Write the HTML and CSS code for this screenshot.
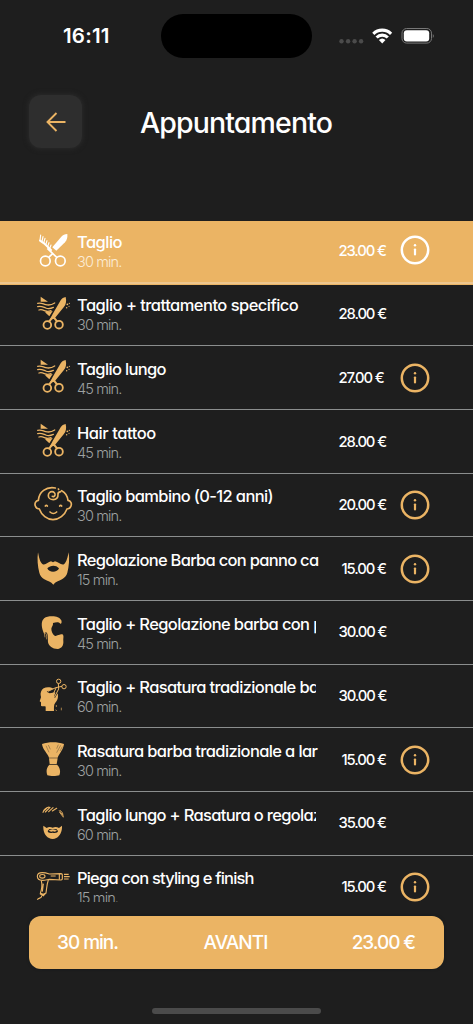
FILE: index.html
```html
<!DOCTYPE html>
<html lang="it">
<head>
<meta charset="utf-8">
<title>Appuntamento</title>
<link rel="stylesheet" href="styles.css">
</head>
<body>
<svg class="defs" aria-hidden="true">
  <symbol id="info" viewBox="0 0 30 30"><circle cx="15" cy="15" r="13.200" fill="none" stroke="currentColor" stroke-width="2.500"/><circle cx="15" cy="10.300" r="1.200" fill="currentColor"/><rect x="13.900" y="13.400" width="2.200" height="7" rx=".8" fill="currentColor"/></symbol>
  <symbol id="cut" viewBox="39 243 120 108">
    <g fill="none" stroke="currentColor" stroke-width="4" stroke-linecap="round">
      <path d="M53 265c10-3 16 2 24 4s17 2 27-5M53 275c10-3 16 1 24 4s15 2 23-2M57 285c8-3 14 1 20 3s10 1 16-1"/>
      <circle cx="82" cy="330" r="11.500" stroke-width="5.500"/><circle cx="117" cy="329" r="11.500" stroke-width="5.500"/>
      <path d="M88 319l9-12M111 319l-9-11" stroke-width="6"/>
    </g>
    <g fill="currentColor"><path d="M62 245l22 15-22 0zM75 292l23-4-10 16zM137 246c3 12 1 23-6 31l-28 34-14 4 9-18 24-41c4-6 8-9 15-10z"/><circle cx="142" cy="268" r="2.700"/><circle cx="148" cy="265" r="2"/><circle cx="140" cy="278" r="2.200"/><circle cx="147" cy="274" r="1.700"/></g>
  </symbol>
</svg>

<header class="status">
  <span class="time">16:11</span>
  <span class="island"></span>
  <svg class="signals" viewBox="0 0 98 18">
    <g fill="#4b4b4b"><circle cx="4.500" cy="14.200" r="2.200"/><circle cx="11.100" cy="14.200" r="2.200"/><circle cx="17.600" cy="14.200" r="2.200"/><circle cx="24.100" cy="14.200" r="2.200"/></g>
    <g fill="none" stroke="#fff" stroke-width="3.100"><path d="M36.300 6.800a12.600 12.600 0 0 1 17.800 0"/><path d="M39.600 10.500a7.900 7.900 0 0 1 11.200 0"/></g>
    <path d="M41.900 13a4.800 4.800 0 0 1 6.600 0l-3.300 3.500z" fill="#fff"/>
    <rect x="65" y="1.500" width="29.500" height="14.600" rx="4.600" fill="none" stroke="#777"/><rect x="66.800" y="3.200" width="25.400" height="11.200" rx="3" fill="#fff"/><path d="M95.800 6.900q2 1.900 0 4z" fill="#777"/>
  </svg>
</header>

<nav class="bar">
  <button class="back" aria-label="Indietro"><svg viewBox="0 0 20 20"><path d="M19.500 10H1.600M10.500 1L1.500 10l9 9" fill="none" stroke="currentColor" stroke-width="1.900"/></svg></button>
  <h1 class="title">Appuntamento</h1>
</nav>

<main class="list">
  <article class="row selected">
    <svg class="icon" viewBox="39 51 120 108">
      <g fill="none" stroke="currentColor" stroke-width="5"><circle cx="76" cy="138" r="14.500"/><circle cx="121" cy="138" r="14.500"/><path d="M86 127l12-11M111 128L82 100"/></g>
      <path d="M142 57c1 10-1 18-7 25l-26 25-12-10 27-32c5-5 10-8 18-8z" fill="currentColor"/>
      <path d="M60 77l12 8L93 105" fill="none" stroke="currentColor" stroke-width="6" stroke-linecap="round"/>
      <path d="M60 76l2-16M66 80l3-15M71 85l4-15M77 90l4-13M83 95l4-12M89 101l4-11" fill="none" stroke="currentColor" stroke-width="3.400" stroke-linecap="round"/>
    </svg>
    <div class="what"><h2 class="name s2">Taglio</h2><p class="time-needed">30 min.</p></div>
    <span class="price">23.00 €</span><svg class="info"><use href="#info"/></svg>
  </article>
  <article class="row">
    <svg class="icon"><use href="#cut"/></svg>
    <div class="what"><h2 class="name s2">Taglio + trattamento specifico</h2><p class="time-needed">30 min.</p></div>
    <span class="price">28.00 €</span><span class="info"></span>
  </article>
  <article class="row">
    <svg class="icon"><use href="#cut"/></svg>
    <div class="what"><h2 class="name s4">Taglio lungo</h2><p class="time-needed">45 min.</p></div>
    <span class="price">27.00 €</span><svg class="info"><use href="#info"/></svg>
  </article>
  <article class="row">
    <svg class="icon"><use href="#cut"/></svg>
    <div class="what"><h2 class="name s1">Hair tattoo</h2><p class="time-needed">45 min.</p></div>
    <span class="price">28.00 €</span><span class="info"></span>
  </article>
  <article class="row">
    <svg class="icon" viewBox="39 35 120 108">
      <g fill="none" stroke="currentColor" stroke-width="5" stroke-linecap="round"><path d="M106 41c-28-5-49 12-51 37-8 1-12 10-9 17 2 6 7 9 12 9 7 19 23 32 41 32s35-13 42-32c5 0 10-3 12-9 3-8-1-16-9-17-2-14-9-24-19-29"/><path d="M115 44l1 1M122 52c-5 1-9 2-8 8 1 9-5 16-14 16s-15-6-15-12c0-7 5-12 11-12 6 0 10 5 9 10-1 4-5 6-8 4"/><path d="M76 95q3-4 6 0M119 95q3-4 6 0"/><path d="M90 113q10 9 20 0"/></g>
    </svg>
    <div class="what"><h2 class="name s3">Taglio bambino (0-12 anni)</h2><p class="time-needed">30 min.</p></div>
    <span class="price">20.00 €</span><svg class="info"><use href="#info"/></svg>
  </article>
  <article class="row">
    <svg class="icon" viewBox="39 226 120 108"><path fill-rule="evenodd" fill="currentColor" d="M54 233c3 14 5 29 14 36 9 4 16-8 25-9l6 3 6-3c10 1 18 13 27 9 8-7 11-22 14-36 3 19 1 43-4 61-2 9-8 15-16 20-10 5-20 8-26 16-7-8-17-11-27-16-8-5-13-11-15-20-5-18-7-42-4-61zM82 281c9-9 25-11 35 0-4 13-31 14-35 0z"/></svg>
    <div class="what"><h2 class="name s5">Regolazione Barba con panno ca</h2><p class="time-needed">15 min.</p></div>
    <span class="price short">15.00 €</span><svg class="info"><use href="#info"/></svg>
  </article>
  <article class="row">
    <svg class="icon" viewBox="39 42 120 108"><path fill="currentColor" d="M71 98c-6-15-8-31-2-39 4-6 11-9 20-10 14-2 30 1 35 12 2 7 0 11-3 10-6-7-14-4-22-2 1 8-4 10-5 17 0 8 4 17 10 21 5 3 7-3 12-2 5 0 8-4 13-1 3 4 0 12 1 19 1 14-5 22-17 24-16 0-26-8-29-20-1-8 1-17-2-26-3-6-9-5-9 2z"/><path d="M73 96c7 4 8 11 7 22M73 98l2 14" fill="none" stroke="currentColor" stroke-width="2"/></svg>
    <div class="what"><h2 class="name s3">Taglio + Regolazione barba con p</h2><p class="time-needed">45 min.</p></div>
    <span class="price">30.00 €</span><span class="info"></span>
  </article>
  <article class="row">
    <svg class="icon" viewBox="39 233 120 108"><path fill="currentColor" d="M100 268c-13-8-33-5-37 9-3 7 0 13 0 17l-4 12 4 3 0 10c4 4 11 0 14 3v13h25c0-10-1-20 4-25 9-9 9-20 7-28l-8 14-3-3 4-14-17 3-9-5z"/><g fill="none" stroke="currentColor"><circle cx="116" cy="246" r="6.500" stroke-width="3"/><circle cx="132" cy="262" r="6.500" stroke-width="3"/><path d="M115 252l1 17-13 25M126 261l-19 4-23 11M109 264l-11 24" stroke-width="3"/><path d="M109 317v6M124 325v8M107 331l3 4" stroke-width="2"/></g></svg>
    <div class="what"><h2 class="name s3">Taglio + Rasatura tradizionale ba</h2><p class="time-needed">60 min.</p></div>
    <span class="price">30.00 €</span><span class="info"></span>
  </article>
  <article class="row">
    <svg class="icon" viewBox="39 49 120 108"><path fill="currentColor" d="M66 58c20-7 46-7 66 0-2 17-14 28-19 41H87c-4-13-19-24-21-41zM87 101h26l-3 17H89zM88 120h23c10 9 11 21 7 32-9 3-27 3-36 0-4-11-3-23 6-32z"/><path d="M78 63l9 20M85 61l6 13M122 62l-12 22M115 60l-5 12M127 66l-7 13" fill="none" stroke="#1e1e1e" stroke-width="1"/></svg>
    <div class="what"><h2 class="name s3">Rasatura barba tradizionale a lar</h2><p class="time-needed">30 min.</p></div>
    <span class="price short">15.00 €</span><svg class="info"><use href="#info"/></svg>
  </article>
  <article class="row">
    <svg class="icon" viewBox="39 240 120 108"><path fill="currentColor" fill-rule="evenodd" d="M70 302l10 7c6-4 12-3 18-1 7-3 13-2 19 1l9-7c1 17-6 31-17 37-7 4-15 4-22 0-12-6-18-20-17-37zM83 318c0 5 7 7 15 5 8 2 16 0 16-5l-5-6-11 2-10-2z"/><path d="M86 316q12-4 25 0-4 6-12 3-8 3-13-3" fill="currentColor"/><g fill="none" stroke="currentColor" stroke-linecap="round"><path d="M69 262q4-13 18-16M76 261l14-14M86 260l13-12M97 258l13-8M72 257l8-7" stroke-width="3.400"/><path d="M118 257l9 12M121 256q9 5 9 20M119 262l9 12" stroke-width="2.600"/></g></svg>
    <div class="what"><h2 class="name s4">Taglio lungo + Rasatura o regolaz</h2><p class="time-needed">60 min.</p></div>
    <span class="price">35.00 €</span><span class="info"></span>
  </article>
  <article class="row">
    <svg class="icon" viewBox="39 56 120 108"><g fill="none" stroke="currentColor" stroke-width="3.400"><path d="M67 70c-9 0-15 5-15 11 0 8 7 12 15 12 8 0 14-2 21-3l35 2q4-1 4-4V76q0-3-4-3l-35 1c-6-2-12-4-21-4z"/><ellipse cx="67" cy="81" rx="8" ry="5.500"/><path d="M64 94c3 12 2 24-3 38l9 3 8-4c2-12 2-25 7-39M70 103l-3 24M60 133l10 6 6-6M65 139c1 10-9 5-13 12M118 74v17"/><path d="M92 80h15M132 75h14M132 82h17M132 89h14" stroke-width="3.600"/></g></svg>
    <div class="what"><h2 class="name s6">Piega con styling e finish</h2><p class="time-needed">15 min.</p></div>
    <span class="price short">15.00 €</span><svg class="info"><use href="#info"/></svg>
  </article>
</main>

<button class="next"><span class="sum-time">30 min.</span><span class="sum-label">AVANTI</span><span class="sum-price">23.00 €</span></button>
<div class="home"></div>
</body>
</html>
```
FILE: styles.css
```css
* { box-sizing: border-box; margin: 0; padding: 0; }
body {
  width: 473px; height: 1024px; overflow: hidden;
  display: flex; flex-direction: column;
  background: #1e1e1e; color: #fff;
  font-family: Inter, "Liberation Sans", sans-serif;
  font-feature-settings: "cv11";
}
button { border: 0; font: inherit; color: inherit; font-feature-settings: inherit; }
.defs { display: none; }

.status {
  height: 72px; flex: none;
  display: grid; grid-template-columns: 161px 151px 161px;
}
.time { padding: 24px 0 0 63px; font-size: 20.500px; line-height: 24px; font-weight: 600; letter-spacing: .2px; }
.island { margin-top: 14px; height: 44px; border-radius: 22px; background: #000; }
.signals { margin: 26.500px 0 0 25px; width: 98px; height: 18px; }

.bar { height: 149.400px; flex: none; display: flex; align-items: flex-start; padding: 23px 0 0 29px; }
.back {
  width: 53px; height: 53px; border-radius: 12px;
  display: grid; place-items: center;
  background: #2e2e2e; color: #ebb464;
  box-shadow: 0 0 5px 1px #2a2a2a;
}
.back svg { width: 20px; height: 20px; }
.title { margin: 10px 0 0 58px; font-size: 28.500px; line-height: 36px; font-weight: 500; letter-spacing: -.88px; }

.list { height: 680.400px; flex: none; overflow: hidden; }
.row {
  height: 63.650px; position: relative;
  display: flex; align-items: flex-start;
  padding: 0 43px 0 33px; color: #fff;
}
.row::after {
  content: ""; position: absolute; left: 0; right: 0; top: 60.400px;
  height: 1px; background: #8b8e8e;
}
.row.selected { background: #ebb464; }
.row.selected::after { height: 2px; background: #edc68e; }
.icon { width: 40px; height: 36px; margin: 10.500px 4px 0 0; flex: none; overflow: visible; color: #ebb464; }
.selected .icon, .selected .info { color: #fff; }
.what { flex: 1; min-width: 0; overflow: hidden; padding-top: 9.400px; margin-right: 23px; height: 60px; }
.name { font-size: 16.500px; line-height: 23px; font-weight: 500; white-space: nowrap; width: 100%; }
.s1 { letter-spacing: -.44px; }
.s2 { letter-spacing: -.53px; }
.s3 { letter-spacing: -.63px; }
.s4 { letter-spacing: -.66px; }
.s5 { letter-spacing: -.71px; }
.s6 { letter-spacing: -.81px; }
.time-needed { font-size: 14.500px; line-height: 15px; font-weight: 300; letter-spacing: -.85px; color: #9da1a1; }
.selected .time-needed { color: #fbecd6; }
.price { width: 47px; margin: 19.200px 14.500px 0 0; flex: none; font-size: 14.800px; line-height: 20px; font-weight: 500; letter-spacing: -1.100px; text-align: left; white-space: nowrap; }
.price.short { width: 44px; }
.info { width: 30px; height: 30px; margin-top: 14px; flex: none; color: #ebb464; }

.next {
  width: 415px; height: 53px; flex: none; margin: 14px 0 0 29px; padding: 0 29px 0 28px;
  border-radius: 12px; background: #ebb464; box-shadow: 0 0 3px #0a192280;
  display: grid; grid-template-columns: 146.500px 1fr auto; align-items: center;
  text-align: left; font-size: 19px; font-weight: 500; white-space: nowrap;
}
.sum-time { letter-spacing: -1.020px; }
.sum-label { letter-spacing: -.95px; }
.sum-price { letter-spacing: -1.080px; }
.home { width: 169px; height: 6px; flex: none; margin: 39px 0 0 152px; border-radius: 3px; background: #4b4b4b; }
```
